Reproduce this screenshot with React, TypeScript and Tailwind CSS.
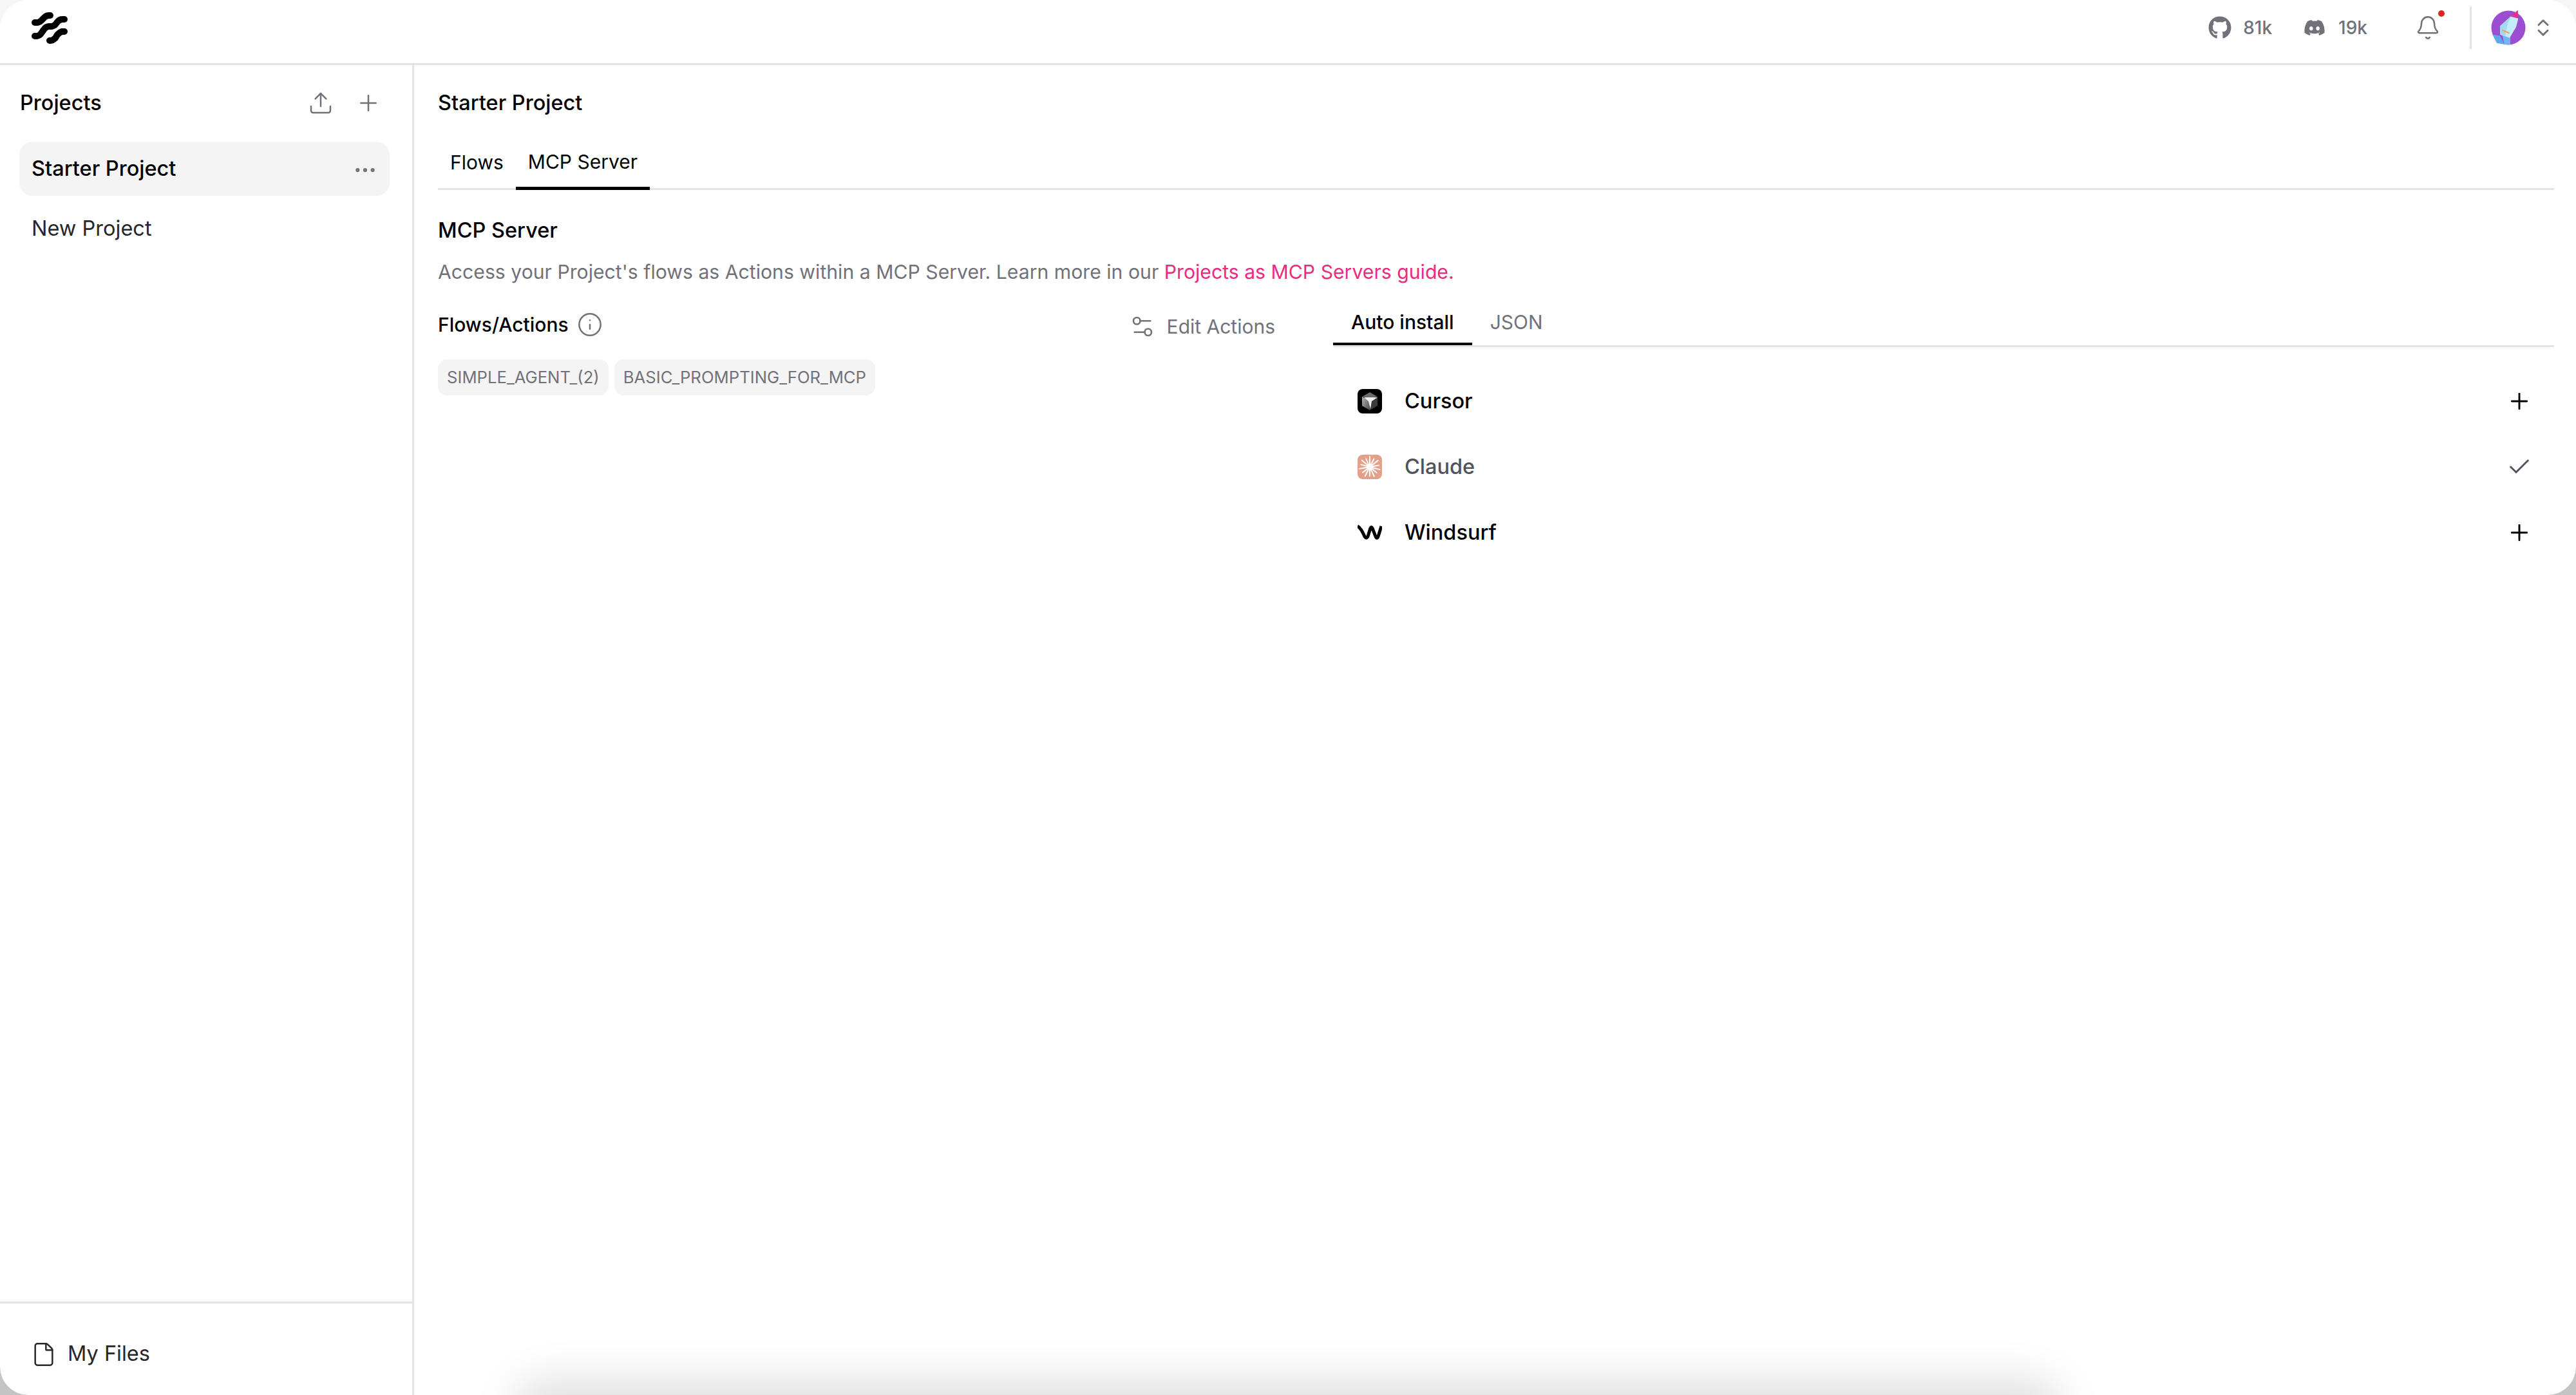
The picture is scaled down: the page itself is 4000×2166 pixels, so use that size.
import React from 'react';
import { Upload, Plus, Ellipsis, Info, Settings2, Check, File, Bell, ChevronsUpDown } from 'lucide-react';
import { FaGithub, FaDiscord } from 'react-icons/fa';

const LangflowLogo = () => (
  <svg width="56" height="50" viewBox="0 0 56 50" fill="none" stroke="#000" strokeWidth="10" strokeLinecap="round" strokeLinejoin="round">
    <path d="M5 17h3c3 0 5-1 7-3l5-5c2-2 4-3 7-3h2" />
    <path d="M5 38h2c3 0 5-1 7-3l5-7c2-3 4-5 8-5h3c3 0 5-1 7-3l4-5c2-2 4-3 7-3h3" />
    <path d="M28 45h2c3 0 4-2 7-4l3-5c2-2 4-4 7-5h4" />
  </svg>
);

const CursorIcon = () => (
  <svg width="38" height="38" viewBox="0 0 38 38">
    <defs>
      <linearGradient id="cursorFace" x1="0" y1="0" x2="1" y2="1">
        <stop offset="0" stopColor="#b5b5b5" />
        <stop offset="1" stopColor="#4a4a4a" />
      </linearGradient>
    </defs>
    <rect width="38" height="38" rx="8" fill="#000" />
    <polygon points="19,5 31,12 19,14 7,12" fill="#6b6b6b" />
    <polygon points="7,12 19,18 19,33 7,26" fill="url(#cursorFace)" />
    <polygon points="31,12 19,18 19,33 31,26" fill="#3a3a3a" />
    <polygon points="10,13 31,13 22,19 20,31 17,19" fill="#efefef" />
  </svg>
);

const ClaudeIcon = () => {
  const rays = [0, 27, 52, 80, 105, 130, 155, 180, 207, 232, 260, 285, 310, 335];
  return (
    <svg width="38" height="38" viewBox="0 0 38 38">
      <rect width="38" height="38" rx="8" fill="#e5a08a" />
      {rays.map((r, i) => (
        <line key={r} x1="19" y1="19" x2="19" y2={i % 2 ? 5 : 3} stroke="#fff" strokeWidth="2" strokeLinecap="round" transform={`rotate(${r} 19 19)`} />
      ))}
      <circle cx="19" cy="19" r="5" fill="#fff" />
    </svg>
  );
};

const WindsurfIcon = () => (
  <svg width="38" height="24" viewBox="0 0 38 24" fill="none" stroke="#000" strokeWidth="5">
    <path d="M0 2c4 2 8 9 11 16 2 3 3 3 5 0l4-13c1-2 2-2 3 0l5 13c1 3 3 3 4 0l5-16" />
  </svg>
);

const RocketAvatar = () => (
  <svg width="54" height="54" viewBox="0 0 54 54" className="overflow-visible">
    <circle cx="27" cy="27" r="26.5" fill="#9b4fd0" />
    <polygon points="2.4,37.7 9,51 20.7,52.7 14,39.4" fill="#5fa8ec" />
    <polygon points="20.7,52.7 30,52.7 30,41 17.4,37.7" fill="#70b6f2" />
    <polygon points="30.7,9.4 42.4,12.7 39,26 29,42.7 14,37.7 14,24.4" fill="#c3ecfb" />
    <polygon points="30.7,9.4 14,24.4 14,37.7 22,40 26,20" fill="#a4d8f5" />
    <polygon points="17.4,29.4 29,34.4 28,36.5 16.5,31.5" fill="#f2a45c" />
    <polygon points="30.7,9.4 42.4,12 41.7,-0.6" fill="#ec2f8e" />
  </svg>
);

const Header = () => (
  <header className="flex h-[101px] shrink-0 items-center justify-between border-b-[3px] border-[#e4e4e7] pb-[12px] pl-[49px] pr-[34px]">
    <LangflowLogo />
    <div className="flex items-center text-[#71717a]">
      <FaGithub size={36} />
      <span className="ml-[18px] text-[28px] font-medium">81k</span>
      <FaDiscord size={34} className="ml-[49px]" />
      <span className="ml-[20px] text-[28px] font-medium">19k</span>
      <div className="relative ml-[74px]">
        <Bell size={40} strokeWidth={1.5} />
        <span className="absolute right-[-6px] top-[-7px] h-[10px] w-[10px] rounded-full bg-[#dc2626]" />
      </div>
      <div className="ml-[45px] h-[66px] w-[3px] bg-[#e4e4e7]" />
      <div className="ml-[30px]">
        <RocketAvatar />
      </div>
      <ChevronsUpDown size={34} strokeWidth={2} className="ml-[10px]" />
    </div>
  </header>
);

const Sidebar = () => (
  <aside className="flex w-[643px] shrink-0 flex-col border-r-[3px] border-[#e4e4e7]">
    <div className="flex-1 pl-[30px] pr-[35px] pt-[29px]">
      <div className="flex h-[60px] items-center justify-between pl-[1px] pr-[13px] text-[#71717a]">
        <span className="text-[32.5px] font-medium text-black">Projects</span>
        <div className="flex items-center gap-[34px]">
          <Upload size={40} strokeWidth={1.5} />
          <Plus size={40} strokeWidth={1.5} />
        </div>
      </div>
      <div className="mt-[30px] flex h-[84px] items-center justify-between rounded-[20px] bg-[#f4f4f5] pl-[19px] pr-[18px]">
        <span className="text-[32.5px] font-medium text-black">Starter Project</span>
        <Ellipsis size={40} strokeWidth={1.75} className="mt-[4px] text-[#71717a]" />
      </div>
      <div className="mt-[9px] flex h-[84px] items-center pl-[19px] text-[32.5px] text-[#27272a]">
        New Project
      </div>
    </div>
    <div className="flex h-[145px] items-center gap-[17px] border-t-[3px] border-[#e4e4e7] pl-[48px] pt-[15px] text-[#27272a]">
      <File size={40} strokeWidth={1.5} />
      <span className="text-[32.5px]">My Files</span>
    </div>
  </aside>
);

const installs = [
  { name: 'Cursor', icon: <CursorIcon />, done: false },
  { name: 'Claude', icon: <ClaudeIcon />, done: true },
  { name: 'Windsurf', icon: <WindsurfIcon />, done: false },
];

const Main = () => (
  <main className="min-w-0 flex-1 pl-[37px] pr-[34px] pt-[29px]">
    <div className="flex h-[60px] items-center text-[32.5px] font-medium text-black">Starter Project</div>

    <div className="mt-[22px] flex h-[83px] border-b-[3px] border-[#e4e4e7] text-[30px] text-black">
      <div className="flex items-center px-[19px] pt-[1px]">Flows</div>
      <div className="-mb-[3px] flex items-center border-b-[5px] border-black px-[19px] pt-[1px]">MCP Server</div>
    </div>

    <h2 className="mt-[41px] text-[32.5px] font-medium leading-[44px] text-black">MCP Server</h2>
    <p className="mt-[20px] text-[30.2px] leading-[44px] text-[#71717a]">
      Access your Project's flows as Actions within a MCP Server. Learn more in our{' '}
      <span className="text-[#ec2a7e]">Projects as MCP Servers guide.</span>
    </p>

    <div className="mt-[34px] flex gap-[90px]">
      <div className="w-[1300px] shrink-0">
        <div className="flex h-[50px] items-center justify-between pt-[2px]">
          <div className="flex items-center gap-[13px] text-[30px] font-medium text-black">
            Flows/Actions
            <Info size={40} strokeWidth={1.5} className="text-[#71717a]" />
          </div>
          <div className="flex items-center gap-[17px] pt-[6px] text-[30px] text-[#71717a]">
            <Settings2 size={42} strokeWidth={1.5} />
            Edit Actions
          </div>
        </div>
        <div className="mt-[30px] flex gap-[9px]">
          <span className="flex h-[56px] items-center rounded-[14px] bg-[#f4f4f5] px-[14px] text-[25.7px] text-[#71717a]">SIMPLE_AGENT_(2)</span>
          <span className="flex h-[56px] items-center rounded-[14px] bg-[#f4f4f5] px-[14px] text-[25.7px] text-[#71717a]">BASIC_PROMPTING_FOR_MCP</span>
        </div>
      </div>

      <div className="min-w-0 flex-1">
        <div className="flex h-[61px] border-b-[3px] border-[#e4e4e7] text-[30px]">
          <div className="flex items-center border-b-[4px] border-black px-[28px] pb-[10px] font-medium text-black">Auto install</div>
          <div className="flex items-center px-[28px] pb-[14px] text-[#71717a]">JSON</div>
        </div>
        <div className="mt-[33px]">
          {installs.map((item) => (
            <div key={item.name} className={`flex h-[102px] items-center justify-between pl-[38px] pr-[34px] ${item.done ? 'text-[#52525b]' : 'text-black'}`}>
              <div className="flex items-center gap-[35px] text-[32.5px] font-medium">
                <span className="flex w-[38px] items-center justify-center">{item.icon}</span>
                {item.name}
              </div>
              {item.done ? <Check size={40} strokeWidth={1.75} /> : <Plus size={40} strokeWidth={1.75} />}
            </div>
          ))}
        </div>
      </div>
    </div>
  </main>
);

export default function App() {
  return (
    <div className="h-screen w-screen overflow-hidden bg-gradient-to-b from-[#f6f6f6] to-[#c4c4c4] font-['Inter',sans-serif]">
      <div className="relative flex h-full w-full flex-col overflow-hidden rounded-[44px] bg-white">
        <Header />
        <div className="flex min-h-0 flex-1">
          <Sidebar />
          <Main />
        </div>
        {/* soft shadow of whatever sits below the window */}
        <div className="absolute bottom-[-50px] left-[820px] right-[820px] h-[50px] rounded-full shadow-[0_0_70px_20px_rgba(0,0,0,0.14)]" />
      </div>
    </div>
  );
}
